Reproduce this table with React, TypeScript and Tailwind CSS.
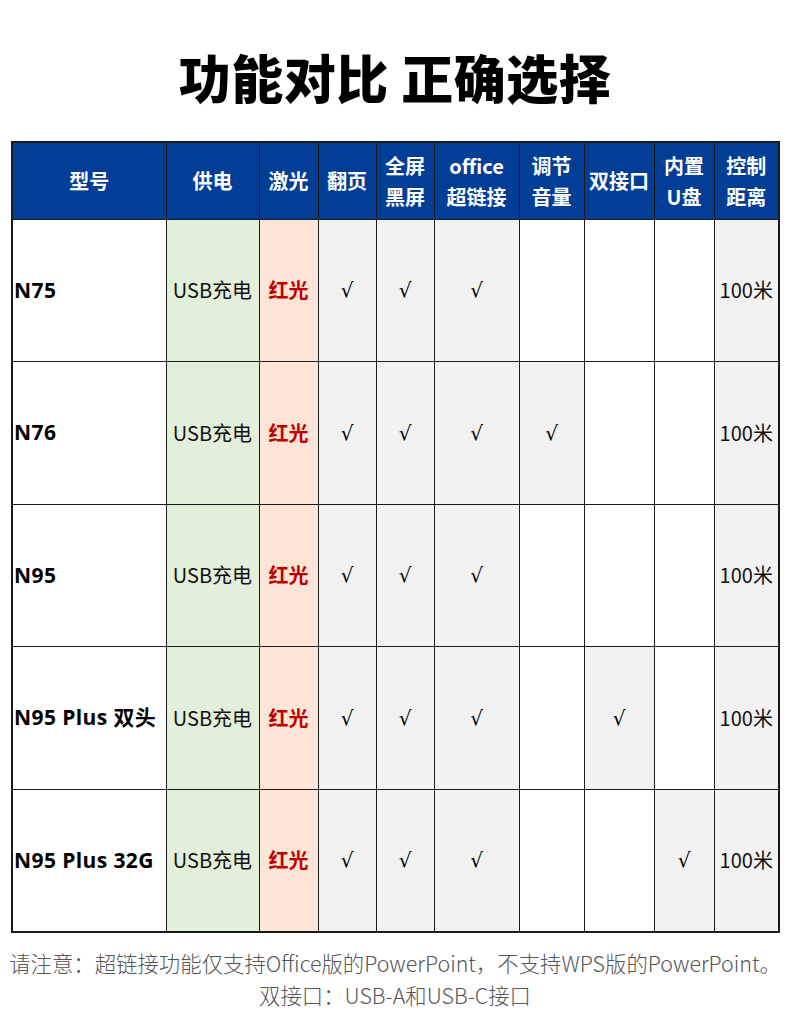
import React from "react";

const font = { fontFamily: '"Noto Sans CJK SC", "Noto Sans", sans-serif' };
const latin = { fontFamily: '"Open Sans", "Noto Sans CJK SC", sans-serif' };
const check = { fontFamily: '"DejaVu Sans", sans-serif' };

type Row = {
  model: string;
  checks: boolean[]; // 翻页 全屏 office 调节 双接口 U盘
};

const rows: Row[] = [
  { model: "N75", checks: [true, true, true, false, false, false] },
  { model: "N76", checks: [true, true, true, true, false, false] },
  { model: "N95", checks: [true, true, true, false, false, false] },
  { model: "N95 Plus 双头", checks: [true, true, true, false, true, false] },
  { model: "N95 Plus 32G", checks: [true, true, true, false, false, true] },
];

const widths = [154, 93, 59, 58, 58, 85, 65, 70, 60, 65];

// the first three check columns are always shaded
const alwaysGray = [true, true, true, false, false, false];

function Head({ children }: { children: React.ReactNode }) {
  return (
    <th className="border border-[#1a1a1a] bg-[#023e96] text-white font-bold text-[20px] leading-[31px] text-center align-middle px-0">
      {children}
    </th>
  );
}

export default function App() {
  return (
    <div className="w-[790px] h-[1020px] bg-white overflow-hidden" style={font}>
      <h1 className="pt-[45px] h-[141px] text-center text-[52px] leading-[64px] font-black text-black tracking-[0.5px]">
        功能对比 正确选择
      </h1>

      <div className="pl-[11px]">
        <table className="border-collapse table-fixed w-[767px] border-2 border-[#1a1a1a]">
          <colgroup>
            {widths.map((w, i) => (
              <col key={i} style={{ width: w }} />
            ))}
          </colgroup>
          <thead>
            <tr className="h-[77px]">
              <Head>型号</Head>
              <Head>供电</Head>
              <Head>激光</Head>
              <Head>翻页</Head>
              <Head>
                全屏
                <br />
                黑屏
              </Head>
              <Head>
                office
                <br />
                超链接
              </Head>
              <Head>
                调节
                <br />
                音量
              </Head>
              <Head>双接口</Head>
              <Head>
                内置
                <br />
                U盘
              </Head>
              <Head>
                控制
                <br />
                距离
              </Head>
            </tr>
          </thead>
          <tbody>
            {rows.map((r) => (
              <tr key={r.model} className="h-[142.6px]">
                <td
                  className="border border-[#1a1a1a] bg-white pl-[1px] text-[21px] tracking-[0.4px] font-bold text-black whitespace-nowrap"
                  style={latin}
                >
                  {r.model}
                </td>
                <td className="border border-[#1a1a1a] bg-[#e2efda] text-center text-[20px] text-[#111]">
                  USB充电
                </td>
                <td className="border border-[#1a1a1a] bg-[#fce4d6] text-center text-[20px] font-bold text-[#c00000]">
                  红光
                </td>
                {r.checks.map((c, i) => (
                  <td
                    key={i}
                    className={
                      "border border-[#1a1a1a] text-center text-[20px] text-black " +
                      (c || alwaysGray[i] ? "bg-[#f2f2f2]" : "bg-white")
                    }
                    style={check}
                  >
                    {c ? "√" : ""}
                  </td>
                ))}
                <td className="border border-[#1a1a1a] bg-[#f2f2f2] text-center text-[20px] text-[#111]">
                  100米
                </td>
              </tr>
            ))}
          </tbody>
        </table>
      </div>

      <div className="pt-[14px] text-center text-[#555] text-[21.4px] leading-[32px] font-light whitespace-nowrap">
        <p>请注意：超链接功能仅支持Office版的PowerPoint，不支持WPS版的PowerPoint。</p>
        <p>双接口：USB-A和USB-C接口</p>
      </div>
    </div>
  );
}
